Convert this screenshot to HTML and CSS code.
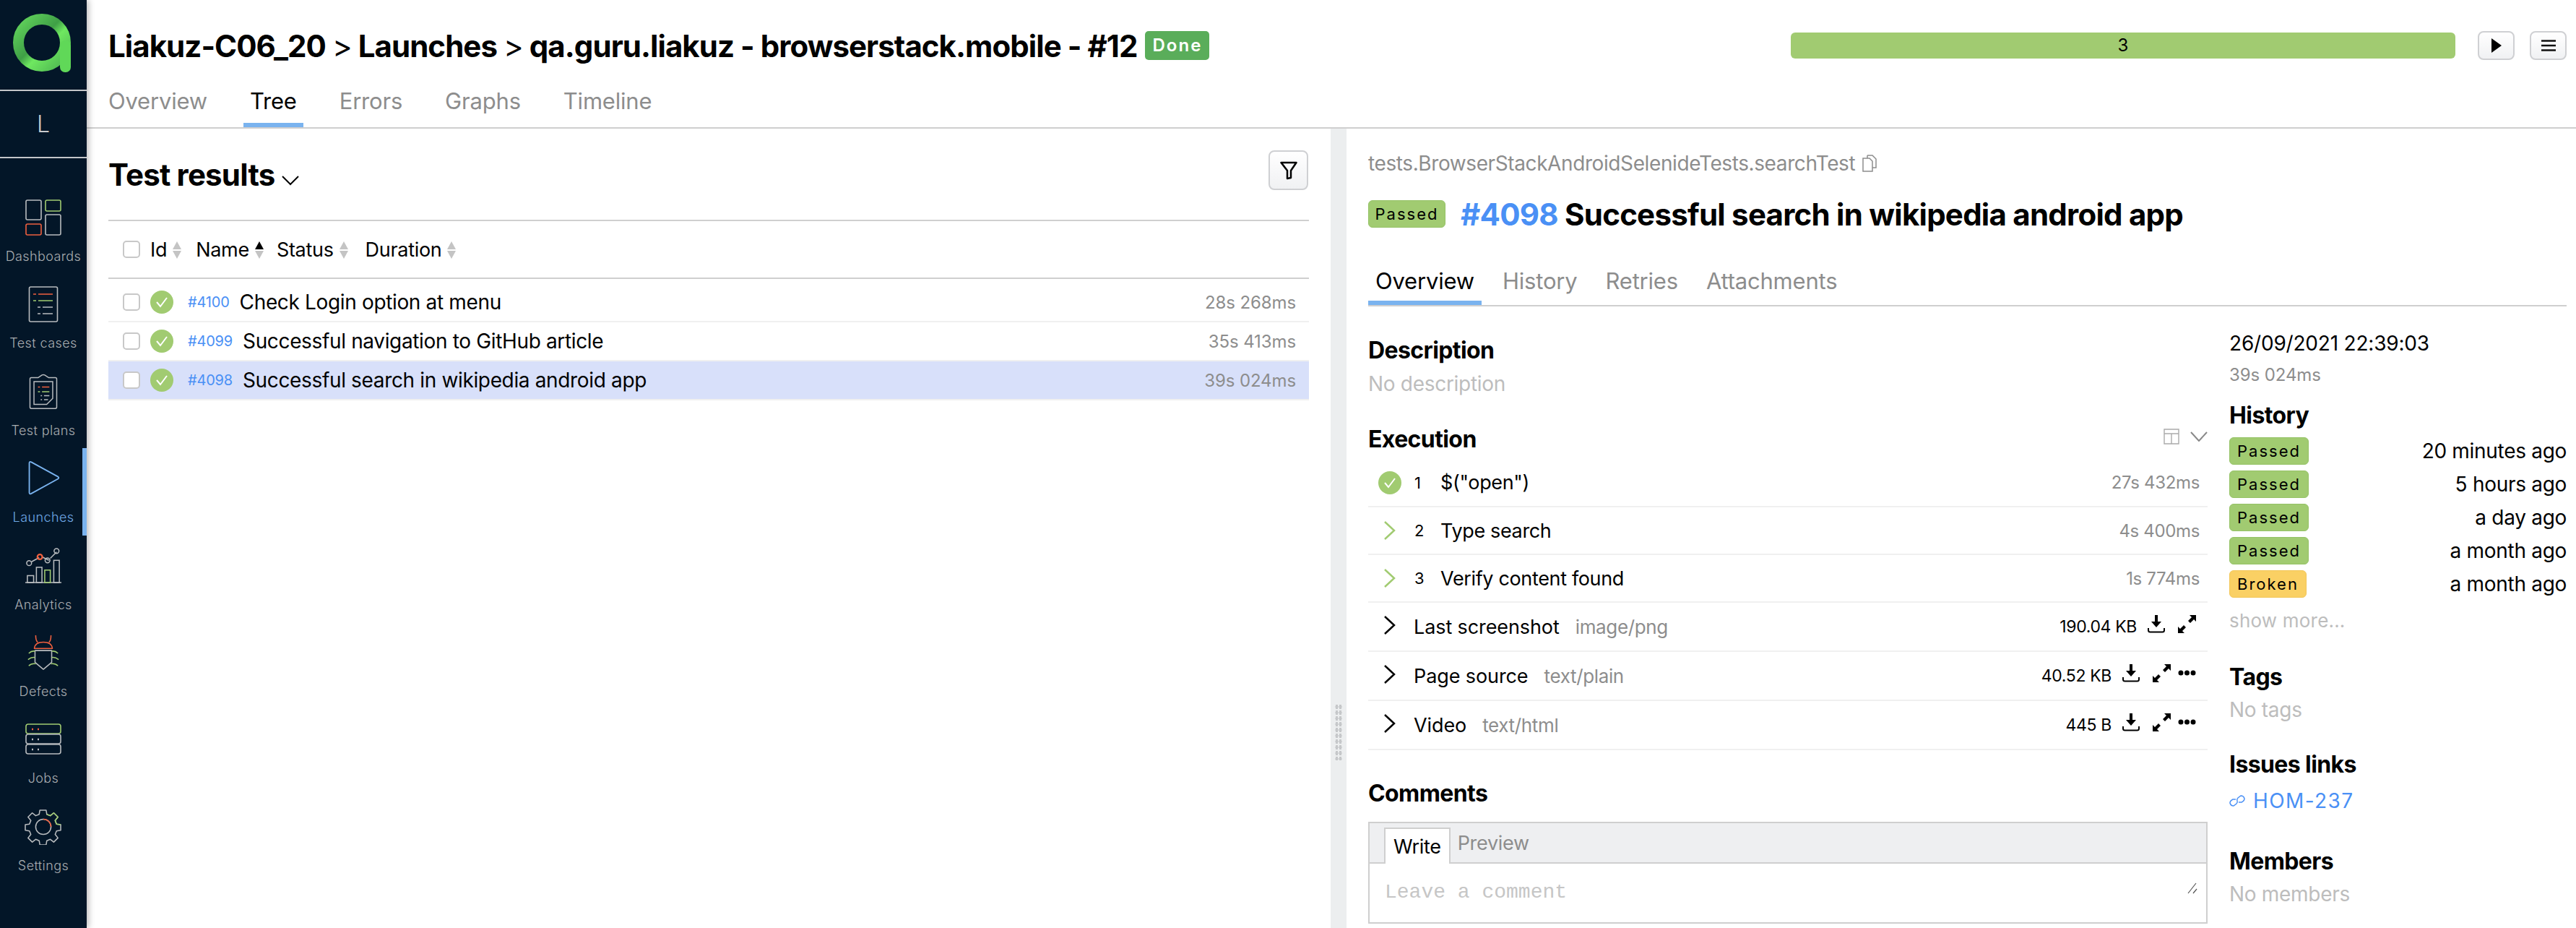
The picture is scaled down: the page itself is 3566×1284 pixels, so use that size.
FILE: index.html
```html
<!DOCTYPE html>
<html>
<head>
    <title>Liakuz-C06_20 Launches</title>
    <link rel="stylesheet" href="styles.css">
</head>
<body>
<div class="app">
    <nav class="sidebar">
        <div class="logo">
            <svg width="84" height="84" viewBox="0 0 84 84">
                <defs>
                    <linearGradient id="ring" x1="0" y1="0" x2="1" y2="1">
                        <stop offset="0" stop-color="#62d45c"/>
                        <stop offset="0.45" stop-color="#3f9f46"/>
                        <stop offset="0.6" stop-color="#6fe860"/>
                        <stop offset="1" stop-color="#4cb551"/>
                    </linearGradient>
                </defs>
                <ellipse cx="42" cy="41" rx="32.5" ry="32.5" fill="none" stroke="url(#ring)" stroke-width="15"/>
                <rect x="67" y="38" width="15" height="44" rx="7" fill="#60d858"/>
            </svg>
        </div>
        <div class="project">L</div>
        <div class="nav-list">
            <a class="nav-item">
                <svg width="50" height="50" viewBox="0 0 50 50" fill="none" stroke="#b9bcbf" stroke-width="1.6">
                    <rect x="1" y="1" width="21" height="27" rx="2"/>
                    <rect x="28" y="1" width="21" height="15" rx="2" stroke="#a1cb71"/>
                    <rect x="1" y="34" width="21" height="15" rx="2" stroke="#f0603f"/>
                    <rect x="28" y="21" width="21" height="28" rx="2"/>
                </svg>
                <span>Dashboards</span>
            </a>
            <a class="nav-item">
                <svg width="50" height="50" viewBox="0 0 50 50" fill="none" stroke="#b9bcbf" stroke-width="1.6">
                    <rect x="5.5" y="1" width="39" height="48" rx="2"/>
                    <path d="M11 11h4M18 11h20" stroke="#f0603f"/>
                    <path d="M11 20h4M18 20h20" stroke="#a1cb71"/>
                    <path d="M17 29h4M24 29h14M17 38h4M24 38h14"/>
                </svg>
                <span>Test cases</span>
            </a>
            <a class="nav-item">
                <svg width="50" height="54" viewBox="0 0 50 54" fill="none" stroke="#b9bcbf" stroke-width="1.6">
                    <path d="M17 6l6-4q2-1 4 0l6 4h10q2 0 2 2v42q0 2-2 2H7q-2 0-2-2V8q0-2 2-2z"/>
                    <path d="M11 12h28v25l-9 9H11z"/>
                    <path d="M17 20h3M23 20h11" stroke="#f0603f"/>
                    <path d="M17 27h3M23 27h11" stroke="#a1cb71"/>
                    <path d="M21 33h2M26 33h8M21 39h2M26 39h6"/>
                </svg>
                <span>Test plans</span>
            </a>
            <a class="nav-item active">
                <svg width="50" height="54" viewBox="0 0 50 54" fill="none" stroke="#7ab3ef" stroke-width="2">
                    <path d="M4 4q0-3 3-1.5l40 22q2 1.500 0 3l-40 22q-3 1.500-3-1.500z" stroke-linejoin="round"/>
                </svg>
                <span>Launches</span>
            </a>
            <a class="nav-item">
                <svg width="54" height="52" viewBox="0 0 54 52" fill="none" stroke="#b9bcbf" stroke-width="1.6">
                    <path d="M1 50h52"/>
                    <rect x="4" y="40" width="9" height="10"/>
                    <rect x="17" y="28" width="8" height="22"/>
                    <rect x="29" y="32" width="8" height="18" stroke="#a1cb71"/>
                    <rect x="42" y="18" width="8" height="32"/>
                    <path d="M10 20l11-6M25 13l10 5M37 15l9-9"/>
                    <circle cx="6.5" cy="22" r="3.5"/>
                    <circle cx="22" cy="13" r="3.5" stroke="#f0603f" stroke-width="2.4"/>
                    <circle cx="33" cy="18" r="3.5"/>
                    <circle cx="46" cy="4.5" r="3.5"/>
                </svg>
                <span>Analytics</span>
            </a>
            <a class="nav-item">
                <svg width="46" height="52" viewBox="0 0 46 52" fill="none" stroke="#b9bcbf" stroke-width="1.6">
                    <path d="M12 1q0 8 3 10M34 1q0 8-3 10M10 20q1-9 13-9t13 9z" stroke="#f0603f" stroke-linejoin="round"/>
                    <path d="M11 23h24v17l-12 10-12-10z" stroke-linejoin="round"/>
                    <path d="M2 27q4-4 9-3M1 36q5-4 10-3M2 45q4-4 10-3M44 27q-4-4-9-3M45 36q-5-4-10-3M44 45q-4-4-10-3" stroke="#a1cb71"/>
                </svg>
                <span>Defects</span>
            </a>
            <a class="nav-item">
                <svg width="50" height="44" viewBox="0 0 50 44" fill="none" stroke="#b9bcbf" stroke-width="1.6">
                    <rect x="1" y="1" width="48" height="13" rx="3" stroke="#a1cb71"/>
                    <rect x="1" y="15" width="48" height="13" rx="3"/>
                    <rect x="1" y="29" width="48" height="13" rx="3"/>
                    <path d="M9 8h2M17 8h2" stroke="#f0603f" stroke-width="2.4"/>
                    <path d="M9 22h2M17 22h2M9 36h2M17 36h2" stroke-width="2.4"/>
                </svg>
                <span>Jobs</span>
            </a>
            <a class="nav-item">
                <svg width="52" height="52" viewBox="0 0 52 52" fill="none" stroke="#b9bcbf" stroke-width="1.6">
                    <path d="M21 2h9l1 6 5 2 5-4 6 6-4 5 2 5 6 1v8l-6 1-2 5 4 5-6 6-5-4-5 2-1 6h-9l-1-6-5-2-5 4-6-6 4-5-2-5-6-1v-8l6-1 2-5-4-5 6-6 5 4 5-2z" stroke-linejoin="round"/>
                    <path d="M31 8l5 2 5-4 6 6-4 5 2 5 6 1" stroke="#a1cb71" stroke-linejoin="round"/>
                    <circle cx="26" cy="26" r="11"/>
                    <path d="M26 15a11 11 0 0 1 11 11" stroke="#f0603f"/>
                </svg>
                <span>Settings</span>
            </a>
        </div>
    </nav>

    <div class="main">
        <header class="page-header">
            <div class="header-top">
                <h1 class="page-title">Liakuz-C06_20 <span class="crumb-sep">&gt;</span> Launches <span class="crumb-sep">&gt;</span> qa.guru.liakuz - browserstack.mobile - #12</h1>
                <span class="badge-done">Done</span>
                <div class="progress">3</div>
                <button class="icon-btn">
                    <svg width="16" height="22" viewBox="0 0 16 22"><path d="M1 1l14 10L1 21z" fill="#000"/></svg>
                </button>
                <button class="icon-btn">
                    <svg width="20" height="16" viewBox="0 0 20 16" stroke="#111" stroke-width="2.5"><path d="M0 1.500h20M0 8h20M0 14.500h20"/></svg>
                </button>
            </div>
            <div class="tabs page-tabs">
                <a class="tab">Overview</a>
                <a class="tab active">Tree</a>
                <a class="tab">Errors</a>
                <a class="tab">Graphs</a>
                <a class="tab">Timeline</a>
            </div>
        </header>

        <div class="panels">
            <section class="results">
                <div class="results-head">
                    <h2 class="results-title">Test results
                        <svg width="24" height="14" viewBox="0 0 24 14" fill="none" stroke="#000" stroke-width="2"><path d="M1 1l11 11L23 1"/></svg>
                    </h2>
                    <button class="filter-btn">
                        <svg width="24" height="26" viewBox="0 0 24 26" fill="none" stroke="#000" stroke-width="2.5" stroke-linejoin="round"><path d="M1.500 2h21L15 13v10l-5 1V13z"/></svg>
                    </button>
                </div>
                <div class="table-head">
                    <span class="check"></span>
                    <span class="col col-id">Id <i class="sort"></i></span>
                    <span class="col col-name">Name <i class="sort asc"></i></span>
                    <span class="col col-status">Status <i class="sort"></i></span>
                    <span class="col col-duration">Duration <i class="sort"></i></span>
                </div>
                <div class="rows">
                    <div class="row">
                        <span class="check"></span>
                        <svg class="ok" width="32" height="32" viewBox="0 0 32 32"><circle cx="16" cy="16" r="16" fill="#a1cb71"/><path d="M9 16l5 6 9-12" fill="none" stroke="#fff" stroke-width="2"/></svg>
                        <span class="test-id">#4100</span>
                        <span class="test-name">Check Login option at menu</span>
                        <span class="test-time">28s 268ms</span>
                    </div>
                    <div class="row">
                        <span class="check"></span>
                        <svg class="ok" width="32" height="32" viewBox="0 0 32 32"><circle cx="16" cy="16" r="16" fill="#a1cb71"/><path d="M9 16l5 6 9-12" fill="none" stroke="#fff" stroke-width="2"/></svg>
                        <span class="test-id">#4099</span>
                        <span class="test-name">Successful navigation to GitHub article</span>
                        <span class="test-time">35s 413ms</span>
                    </div>
                    <div class="row selected">
                        <span class="check"></span>
                        <svg class="ok" width="32" height="32" viewBox="0 0 32 32"><circle cx="16" cy="16" r="16" fill="#a1cb71"/><path d="M9 16l5 6 9-12" fill="none" stroke="#fff" stroke-width="2"/></svg>
                        <span class="test-id">#4098</span>
                        <span class="test-name">Successful search in wikipedia android app</span>
                        <span class="test-time">39s 024ms</span>
                    </div>
                </div>
            </section>

            <div class="splitter"><div class="grip"></div></div>

            <section class="details">
                <div class="test-path">tests.BrowserStackAndroidSelenideTests.searchTest
                    <svg width="20" height="24" viewBox="0 0 20 24" fill="none" stroke="#8d8d8d" stroke-width="1.5"><path d="M7 1h7l5 5v12h-5M7 1v4M1 5h9l4 4v14H1z"/></svg>
                </div>
                <div class="test-title">
                    <span class="badge passed big">Passed</span>
                    <h1><span class="title-id">#4098</span> Successful search in wikipedia android app</h1>
                </div>
                <div class="tabs detail-tabs">
                    <a class="tab active">Overview</a>
                    <a class="tab">History</a>
                    <a class="tab">Retries</a>
                    <a class="tab">Attachments</a>
                </div>
                <div class="detail-cols">
                    <div class="detail-main">
                        <h3 class="section first-section">Description</h3>
                        <p class="muted">No description</p>

                        <div class="exec-head">
                            <h3 class="section">Execution</h3>
                            <div class="exec-tools">
                                <svg width="22" height="22" viewBox="0 0 22 22" fill="none" stroke="#aaa" stroke-width="1.4"><path d="M1 1h20v20H1zM1 7h20M11 7v14"/></svg>
                                <svg width="24" height="14" viewBox="0 0 24 14" fill="none" stroke="#888" stroke-width="2"><path d="M1 1l11 12L23 1"/></svg>
                            </div>
                        </div>
                        <div class="exec-row step-first">
                            <svg class="ok" width="32" height="32" viewBox="0 0 32 32"><circle cx="16" cy="16" r="16" fill="#a1cb71"/><path d="M9 16l5 6 9-12" fill="none" stroke="#fff" stroke-width="2"/></svg>
                            <span class="step-no">1</span>
                            <span class="step-name">$("open")</span>
                            <span class="step-time">27s 432ms</span>
                        </div>
                        <div class="exec-row">
                            <span class="step-arrow"><svg width="18" height="26" viewBox="0 0 18 26" fill="none" stroke="#a1cb71" stroke-width="2.5"><path d="M2 1l13 12L2 25"/></svg></span>
                            <span class="step-no">2</span>
                            <span class="step-name">Type search</span>
                            <span class="step-time">4s 400ms</span>
                        </div>
                        <div class="exec-row">
                            <span class="step-arrow"><svg width="18" height="26" viewBox="0 0 18 26" fill="none" stroke="#a1cb71" stroke-width="2.5"><path d="M2 1l13 12L2 25"/></svg></span>
                            <span class="step-no">3</span>
                            <span class="step-name">Verify content found</span>
                            <span class="step-time">1s 774ms</span>
                        </div>
                        <div class="exec-row attachment">
                            <svg class="att-arrow" width="18" height="26" viewBox="0 0 18 26" fill="none" stroke="#000" stroke-width="2.5"><path d="M2 1l13 12L2 25"/></svg>
                            <span class="att-name">Last screenshot</span>
                            <span class="att-type">image/png</span>
                            <span class="att-size">190.04 KB</span>
                            <svg class="att-icon dl" width="24" height="25" viewBox="0 0 24 25" fill="#000"><path d="M10 0h4v9h5l-7 8-7-8h5z"/><path d="M1 18v3q0 2.500 2.500 2.500h17q2.500 0 2.500-2.500v-3" fill="none" stroke="#000" stroke-width="2"/></svg>
                            <svg class="att-icon ex" width="25" height="25" viewBox="0 0 25 25" fill="#000"><path d="M16 0h9v9l-3-3-5 5-3-3 5-5zM0 25v-9l3 3 5-5 3 3-5 5 3 3z"/></svg>
                        </div>
                        <div class="exec-row attachment">
                            <svg class="att-arrow" width="18" height="26" viewBox="0 0 18 26" fill="none" stroke="#000" stroke-width="2.5"><path d="M2 1l13 12L2 25"/></svg>
                            <span class="att-name">Page source</span>
                            <span class="att-type">text/plain</span>
                            <span class="att-size">40.52 KB</span>
                            <svg class="att-icon dl" width="24" height="25" viewBox="0 0 24 25" fill="#000"><path d="M10 0h4v9h5l-7 8-7-8h5z"/><path d="M1 18v3q0 2.500 2.500 2.500h17q2.500 0 2.500-2.500v-3" fill="none" stroke="#000" stroke-width="2"/></svg>
                            <svg class="att-icon ex" width="25" height="25" viewBox="0 0 25 25" fill="#000"><path d="M16 0h9v9l-3-3-5 5-3-3 5-5zM0 25v-9l3 3 5-5 3 3-5 5 3 3z"/></svg>
                            <svg class="att-icon more" width="25" height="8" viewBox="0 0 25 8" fill="#000"><circle cx="4" cy="4" r="3.5"/><circle cx="12.5" cy="4" r="3.5"/><circle cx="21" cy="4" r="3.5"/></svg>
                        </div>
                        <div class="exec-row attachment">
                            <svg class="att-arrow" width="18" height="26" viewBox="0 0 18 26" fill="none" stroke="#000" stroke-width="2.5"><path d="M2 1l13 12L2 25"/></svg>
                            <span class="att-name">Video</span>
                            <span class="att-type">text/html</span>
                            <span class="att-size">445 B</span>
                            <svg class="att-icon dl" width="24" height="25" viewBox="0 0 24 25" fill="#000"><path d="M10 0h4v9h5l-7 8-7-8h5z"/><path d="M1 18v3q0 2.500 2.500 2.500h17q2.500 0 2.500-2.500v-3" fill="none" stroke="#000" stroke-width="2"/></svg>
                            <svg class="att-icon ex" width="25" height="25" viewBox="0 0 25 25" fill="#000"><path d="M16 0h9v9l-3-3-5 5-3-3 5-5zM0 25v-9l3 3 5-5 3 3-5 5 3 3z"/></svg>
                            <svg class="att-icon more" width="25" height="8" viewBox="0 0 25 8" fill="#000"><circle cx="4" cy="4" r="3.5"/><circle cx="12.5" cy="4" r="3.5"/><circle cx="21" cy="4" r="3.5"/></svg>
                        </div>

                        <h3 class="section comments-title">Comments</h3>
                        <div class="comment-box">
                            <div class="comment-tabs">
                                <span class="comment-tab active">Write</span>
                                <span class="comment-tab">Preview</span>
                            </div>
                            <div class="comment-input">
                                Leave a comment
                                <svg class="resize" width="14" height="16" viewBox="0 0 14 16" stroke="#555" stroke-width="1.2"><path d="M1 15L12 1M8 15l5-6"/></svg>
                            </div>
                        </div>
                    </div>

                    <aside class="detail-side">
                        <div class="run-date">26/09/2021 22:39:03</div>
                        <div class="run-time">39s 024ms</div>
                        <h3 class="section side-history">History</h3>
                        <div class="history-list">
                            <div class="history-row"><span class="badge passed">Passed</span><span>20 minutes ago</span></div>
                            <div class="history-row"><span class="badge passed">Passed</span><span>5 hours ago</span></div>
                            <div class="history-row"><span class="badge passed">Passed</span><span>a day ago</span></div>
                            <div class="history-row"><span class="badge passed">Passed</span><span>a month ago</span></div>
                            <div class="history-row"><span class="badge broken">Broken</span><span>a month ago</span></div>
                        </div>
                        <div class="show-more">show more...</div>
                        <h3 class="section side-tags">Tags</h3>
                        <p class="muted side-note">No tags</p>
                        <h3 class="section side-issues">Issues links</h3>
                        <a class="issue-link">
                            <svg width="22" height="16" viewBox="0 0 22 16" fill="none" stroke="#4a90f5" stroke-width="1.5"><path d="M9 6L5 6Q1 8 1 11q1 4 5 4l4-3q2-2 1-4M13 10l4 0q4-2 4-5-1-4-5-4l-4 3q-2 2-1 4"/></svg>
                            HOM-237
                        </a>
                        <h3 class="section side-members">Members</h3>
                        <p class="muted side-note">No members</p>
                    </aside>
                </div>
            </section>
        </div>
    </div>
</div>
</body>
</html>
```

FILE: styles.css
```css
html, body {
    margin: 0;
    height: 100%;
    overflow: hidden;
}
body {
    font-family: Inter, "Liberation Sans", sans-serif;
    color: #000;
    background: #fff;
}
.app {
    display: flex;
    height: 1284px;
}

/* sidebar */
.sidebar {
    width: 120px;
    flex: none;
    background: #031628;
    box-shadow: 3px 0 8px rgba(0, 0, 0, 0.25);
    position: relative;
    z-index: 2;
}
.logo {
    height: 126px;
    box-sizing: border-box;
    padding: 18px 0 0 16px;
    border-bottom: 2px solid #c4c6c9;
}
.project {
    height: 91px;
    line-height: 91px;
    text-align: center;
    font-size: 32px;
    font-weight: 300;
    color: #c9cbce;
    border-bottom: 2px solid #c4c6c9;
}
.nav-list {
    padding-top: 40px;
}
.nav-item {
    display: flex;
    flex-direction: column;
    align-items: center;
    box-sizing: border-box;
    height: 120.4px;
    padding-top: 17px;
    color: #a9adb1;
    font-size: 18px;
    font-weight: 300;
    letter-spacing: 0.4px;
}
.nav-item svg {
    height: 50px;
    flex: none;
}
.nav-item span {
    margin-top: 18px;
    line-height: 22px;
}
.nav-item.active {
    color: #6fa8e6;
    border-right: 6px solid #7ab3ef;
    padding-left: 6px;
}

/* header */
.main {
    flex: 1;
    min-width: 0;
    display: flex;
    flex-direction: column;
}
.page-header {
    height: 178px;
    box-sizing: border-box;
    padding: 34px 13px 0 30px;
    border-bottom: 2px solid #cfcfcf;
}
.header-top {
    display: flex;
    align-items: center;
    height: 58px;
}
.page-title {
    margin: 0;
    font-size: 42px;
    font-weight: 700;
    letter-spacing: -0.95px;
    white-space: nowrap;
}
.crumb-sep {
    font-weight: 400;
}
.badge-done {
    margin-left: 11px;
    width: 89px;
    height: 40px;
    line-height: 40px;
    background: #5aad5a;
    border-radius: 5px;
    color: #fff;
    text-align: center;
    font-size: 24px;
    font-weight: 600;
    letter-spacing: 2px;
}
.progress {
    margin-left: auto;
    width: 920px;
    height: 36px;
    line-height: 36px;
    background: #a1cb71;
    border-radius: 6px;
    text-align: center;
    font-size: 24px;
}
.icon-btn {
    display: flex;
    align-items: center;
    justify-content: center;
    width: 51px;
    height: 40px;
    padding: 0;
    margin-left: 31px;
    background: linear-gradient(#fff, #f0f1f3);
    border: 2px solid #cfd0d3;
    border-radius: 8px;
}
.icon-btn + .icon-btn {
    margin-left: 21px;
}
.tabs {
    display: flex;
    gap: 41px;
}
.page-tabs {
    margin: 12px 0 0 -9px;
}
.tab {
    color: #8d8d8d;
    font-size: 31px;
    letter-spacing: -0.2px;
    white-space: nowrap;
}
.page-tabs .tab {
    height: 66px;
    line-height: 72px;
    padding: 0 9px;
    border-bottom: 6px solid transparent;
}
.tab.active {
    color: #000;
    border-bottom: 6px solid #7ab3ef !important;
}

/* left panel */
.panels {
    flex: 1;
    display: flex;
    min-height: 0;
}
.results {
    width: 1662px;
    flex: none;
    padding: 0 30px;
}
.results-head {
    display: flex;
    justify-content: space-between;
    align-items: flex-start;
    height: 126px;
    border-bottom: 2px solid #cfcfcf;
}
.results-title {
    margin: 36px 0 0;
    line-height: 56px;
    font-size: 42px;
    font-weight: 700;
    letter-spacing: -0.8px;
}
.filter-btn {
    display: flex;
    align-items: center;
    justify-content: center;
    width: 55px;
    height: 55px;
    margin: 30px 1px 0 0;
    padding: 0;
    background: linear-gradient(#fff, #f0f1f3);
    border: 2px solid #cfd0d3;
    border-radius: 8px;
}
.table-head {
    display: flex;
    align-items: center;
    height: 78px;
    padding-left: 20px;
    border-bottom: 2px solid #cfcfcf;
    font-size: 27px;
    letter-spacing: -0.3px;
}
.check {
    width: 20px;
    height: 20px;
    flex: none;
    background: #fff;
    border: 2px solid #c8c8c8;
    border-radius: 5px;
}
.col {
    display: flex;
    align-items: center;
    gap: 8px;
}
.col-id {
    margin-left: 14px;
}
.col-name {
    margin-left: 20px;
}
.col-status {
    margin-left: 18px;
}
.col-duration {
    margin-left: 24px;
}
.sort {
    display: block;
    width: 0;
    height: 0;
    border-left: 6px solid transparent;
    border-right: 6px solid transparent;
    border-bottom: 11px solid #c4c4c4;
    position: relative;
    top: -6px;
}
.sort::after {
    content: "";
    position: absolute;
    left: -6px;
    top: 13px;
    border-left: 6px solid transparent;
    border-right: 6px solid transparent;
    border-top: 11px solid #c4c4c4;
}
.sort.asc {
    border-bottom-color: #000;
}
.rows {
    margin-top: 6px;
}
.row {
    display: flex;
    align-items: center;
    height: 52px;
    padding: 0 18px 0 20px;
    border-bottom: 2px solid #f0f0f0;
}
.row.selected {
    background: #d8e0fa;
}
.ok {
    flex: none;
}
.row .ok {
    margin-left: 14px;
}
.test-id {
    margin-left: 20px;
    font-size: 20px;
    color: #4a90f5;
    letter-spacing: -0.2px;
}
.test-name {
    margin-left: 14px;
    font-size: 28px;
    letter-spacing: -0.35px;
}
.test-time {
    margin-left: auto;
    font-size: 24px;
    color: #8d8d8d;
    letter-spacing: -0.1px;
}

/* splitter */
.splitter {
    width: 22px;
    flex: none;
    background: #eceeef;
    display: flex;
    align-items: flex-start;
    justify-content: center;
}
.grip {
    width: 10px;
    height: 78px;
    margin-top: 796px;
    background-image: radial-gradient(#c6c8ca 55%, transparent 60%);
    background-size: 5px 8px;
}

/* right panel */
.details {
    flex: 1;
    min-width: 0;
    padding: 0 13px 0 30px;
}
.test-path {
    display: flex;
    align-items: center;
    gap: 10px;
    margin-top: 30px;
    line-height: 36px;
    font-size: 28px;
    color: #8d8d8d;
    letter-spacing: -0.4px;
}
.test-title {
    display: flex;
    align-items: center;
    margin-top: 24px;
    height: 56px;
}
.test-title h1 {
    margin: 0 0 0 21px;
    font-size: 42px;
    font-weight: 700;
    letter-spacing: -0.75px;
    white-space: nowrap;
}
.title-id {
    color: #4a90f5;
}
.badge {
    display: inline-block;
    box-sizing: border-box;
    height: 38px;
    line-height: 36px;
    padding: 0 10px;
    border-radius: 6px;
    font-size: 22px;
    letter-spacing: 2px;
}
.badge.passed {
    background: #a1cb71;
    border: 1px solid #95c266;
}
.badge.broken {
    background: #fad064;
    border: 1px solid #f2c658;
}
.badge.big {
    width: 107px;
    padding: 0;
    text-align: center;
    flex: none;
}
.detail-tabs {
    gap: 19px;
    margin-top: 47px;
    border-bottom: 2px solid #cfcfcf;
}
.detail-tabs .tab {
    height: 45px;
    line-height: 36px;
    padding: 0 10px;
}
.detail-cols {
    display: flex;
    gap: 30px;
}
.detail-main {
    width: 1162px;
    flex: none;
}
.detail-side {
    flex: 1;
    min-width: 0;
    padding-top: 34px;
}
.section {
    margin: 0;
    line-height: 40px;
    font-size: 32px;
    font-weight: 700;
    letter-spacing: -0.6px;
}
.first-section {
    margin-top: 41px;
}
.muted {
    margin: 8px 0 0;
    line-height: 36px;
    font-size: 28px;
    color: #bdbdbd;
    letter-spacing: -0.3px;
}
.exec-head {
    display: flex;
    justify-content: space-between;
    height: 47px;
    margin-top: 39px;
}
.exec-tools {
    display: flex;
    align-items: center;
    gap: 15px;
    height: 32px;
}
.exec-row {
    display: flex;
    align-items: center;
    height: 64px;
    padding: 0 11px 0 14px;
    border-bottom: 2px solid #f0f0f0;
    font-size: 27px;
    letter-spacing: -0.35px;
}
.step-first {
    height: 65px;
}
.step-arrow {
    display: flex;
    justify-content: center;
    width: 32px;
    flex: none;
}
.step-no {
    width: 12px;
    margin-left: 18px;
    font-size: 22px;
}
.step-name {
    margin-left: 24px;
}
.step-time {
    margin-left: auto;
    font-size: 24px;
    color: #8d8d8d;
}
.attachment {
    height: 66px;
    padding: 0 16px 0 21px;
}
.att-arrow {
    flex: none;
    margin-top: -4px;
}
.att-name {
    margin-left: 24px;
    letter-spacing: -0.1px;
}
.att-type {
    margin-left: 22px;
    color: #8d8d8d;
    font-size: 26px;
}
.att-size {
    margin-left: auto;
    font-size: 23px;
}
.att-icon {
    flex: none;
    margin-top: -8px;
}
.dl {
    margin-left: 15px;
}
.ex {
    margin-left: 18px;
}
.more {
    margin-left: 10px;
}
.comments-title {
    margin-top: 40px;
}
.comment-box {
    margin-top: 19px;
    height: 137px;
    border: 2px solid #cfcfcf;
}
.comment-tabs {
    display: flex;
    align-items: flex-end;
    box-sizing: border-box;
    height: 56px;
    padding: 0 0 0 20px;
    background: #eeeff1;
    border-bottom: 2px solid #cfcfcf;
    font-size: 27px;
}
.comment-tab {
    height: 46px;
    line-height: 40px;
    padding: 0 10px;
    color: #8d8d8d;
    letter-spacing: -0.3px;
}
.comment-tab.active {
    box-sizing: border-box;
    height: 50px;
    line-height: 50px;
    margin-bottom: -2px;
    background: #fff;
    color: #000;
    border: 2px solid #cfcfcf;
    border-bottom: none;
    padding: 0 11px;
}
.comment-input {
    position: relative;
    padding: 22px 0 0 21px;
    font-family: "Liberation Mono", monospace;
    font-size: 28px;
    line-height: 36px;
    color: #c6c6c6;
}
.resize {
    position: absolute;
    right: 12px;
    bottom: 16px;
}

/* side column */
.run-date {
    line-height: 34px;
    font-size: 28px;
    letter-spacing: -0.2px;
}
.run-time {
    margin-top: 12px;
    line-height: 30px;
    font-size: 24px;
    color: #8d8d8d;
    letter-spacing: -0.1px;
}
.side-history {
    margin-top: 21px;
}
.history-list {
    margin-top: 10px;
}
.history-row {
    display: flex;
    justify-content: space-between;
    align-items: center;
    height: 38px;
    margin-bottom: 8px;
    font-size: 28px;
    letter-spacing: -0.3px;
}
.show-more {
    margin-top: 14px;
    line-height: 36px;
    font-size: 26px;
    color: #bdbdbd;
    letter-spacing: 0.2px;
}
.side-tags {
    margin-top: 40px;
}
.side-note {
    margin-top: 7px;
}
.side-issues {
    margin-top: 38px;
}
.issue-link {
    display: flex;
    align-items: center;
    gap: 11px;
    margin-top: 12px;
    line-height: 36px;
    font-size: 28px;
    letter-spacing: 1.4px;
    color: #4a90f5;
}
.side-members {
    margin-top: 46px;
}
```
